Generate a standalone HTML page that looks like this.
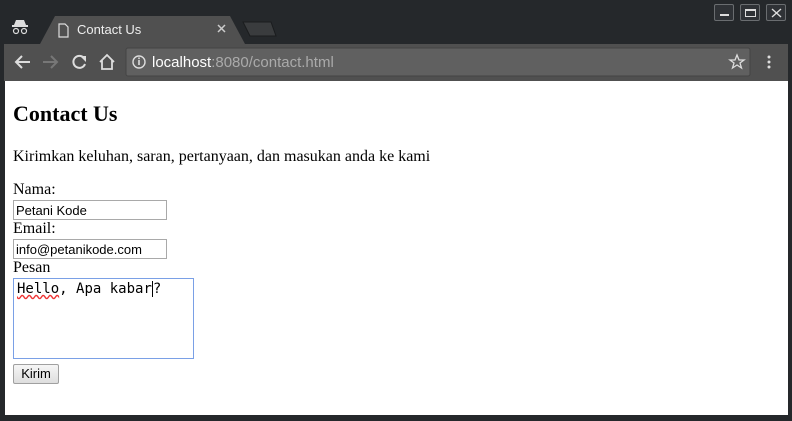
<!DOCTYPE html>
<html><head><meta charset="utf-8"><style>
*{margin:0;padding:0;box-sizing:border-box}
body{width:792px;height:421px;background:#25282b;position:relative;overflow:hidden;font-family:"Liberation Serif",serif}
.abs{position:absolute}
#content{left:5px;top:81px;width:783px;height:334px;background:#fff}
.wb{top:4px;width:20px;height:17px;border:1px solid #6a6d70;border-radius:2px;background:#2f3236}
.ui{font-family:"Liberation Sans",sans-serif}
input.t{position:absolute;left:8px;width:154px;height:20px;border:1px solid #a9a9a9;font:13px "Liberation Sans",sans-serif;padding:1px 2px;color:#000}
</style></head><body>
<svg class="abs" style="left:0;top:0" width="792" height="81">
<path d="M40 44 L55 16 L230 16 L245 44 Z" fill="#505050"/>
<path d="M243 22 L271 22 L276 36 L250 36 Z" fill="#3a3c3e" stroke="#1a1c1e" stroke-width="1"/>
<rect x="4" y="44" width="784" height="37" fill="#505050"/>
<rect x="126" y="48" width="624" height="28" rx="2" fill="#606060" stroke="#444" stroke-width="1"/>
<path d="M14 25 L16 20 L24 20 L26 25 Z" fill="#ddd"/><rect x="12" y="25" width="16" height="2" fill="#ddd"/>
<circle cx="16" cy="31" r="2.5" fill="none" stroke="#ddd" stroke-width="1.2"/><circle cx="24" cy="31" r="2.5" fill="none" stroke="#ddd" stroke-width="1.2"/>
<path d="M59 24 h6 l3 3 v10 h-9 Z" fill="none" stroke="#ddd" stroke-width="1.2"/>
<path d="M218 25 l7 7 M225 25 l-7 7" stroke="#ccc" stroke-width="1.5"/>
<path d="M30 62 H16 M22 56 L16 62 L22 68" fill="none" stroke="#ddd" stroke-width="2"/>
<path d="M43 62 H57 M51 56 L57 62 L51 68" fill="none" stroke="#777" stroke-width="2"/>
<path d="M84 58 A6 6 0 1 0 85 64" fill="none" stroke="#ddd" stroke-width="2"/><path d="M80 56 L86 56 L86 62 Z" fill="#ddd"/>
<path d="M100 62 L107 55 L114 62 M102 60 V69 H112 V60" fill="none" stroke="#ddd" stroke-width="1.8"/>
<circle cx="139" cy="62" r="6" fill="none" stroke="#ddd" stroke-width="1.4"/><rect x="138.2" y="60" width="1.6" height="5" fill="#ddd"/><rect x="138.2" y="57.5" width="1.6" height="1.6" fill="#ddd"/>
<path d="M737 55 l2 5 5 0 -4 3 1.5 5 -4.5 -3 -4.5 3 1.5 -5 -4 -3 5 0 Z" fill="none" stroke="#ddd" stroke-width="1.3"/>
<circle cx="769" cy="57" r="1.5" fill="#ddd"/><circle cx="769" cy="62" r="1.5" fill="#ddd"/><circle cx="769" cy="67" r="1.5" fill="#ddd"/>
</svg>
<div class="abs wb" style="left:714px"><div class="abs" style="left:5px;top:9px;width:9px;height:2px;background:#ddd"></div></div>
<div class="abs wb" style="left:740px"><div class="abs" style="left:4px;top:4px;width:11px;height:8px;border:1px solid #ddd;border-top-width:2px"></div></div>
<div class="abs wb" style="left:766px"><svg class="abs" style="left:4px;top:3px" width="11" height="10"><path d="M1 1 L10 9 M10 1 L1 9" stroke="#ddd" stroke-width="1.4"/></svg></div>
<div class="abs ui" style="left:77px;top:22px;font-size:13px;color:#eee">Contact Us</div>
<div class="abs ui" style="left:152px;top:54px;font-size:15px;color:#fff">localhost<span style="color:#aaa">:8080/contact.html</span></div>
<div id="content" class="abs">
<div class="abs" style="left:8px;top:20px;font-size:22px;font-weight:bold">Contact Us</div>
<div class="abs" style="left:8px;top:67px;font-size:16px">Kirimkan keluhan, saran, pertanyaan, dan masukan anda ke kami</div>
<div class="abs" style="left:8px;top:100px;font-size:16px">Nama:</div>
<input class="t" style="top:119px" value="Petani Kode">
<div class="abs" style="left:8px;top:139px;font-size:16px">Email:</div>
<input class="t" style="top:158px" value="info@petanikode.com">
<div class="abs" style="left:8px;top:178px;font-size:16px">Pesan</div>
<div class="abs" style="left:8px;top:197px;width:181px;height:81px;border:1px solid #7aa0e6;font:14px 'DejaVu Sans Mono','Liberation Mono',monospace;padding:2px 3px"><span style="text-decoration:underline wavy #e33">Hello</span>, Apa kabar<span style="border-left:1px solid #000"></span>?</div>
<div class="abs" style="left:8px;top:283px;width:46px;height:20px;border:1px solid #a0a0a0;border-radius:2px;background:linear-gradient(#f6f6f6,#dedede);font:13px 'Liberation Sans',sans-serif;text-align:center;line-height:18px">Kirim</div>
</div>
</body></html>
